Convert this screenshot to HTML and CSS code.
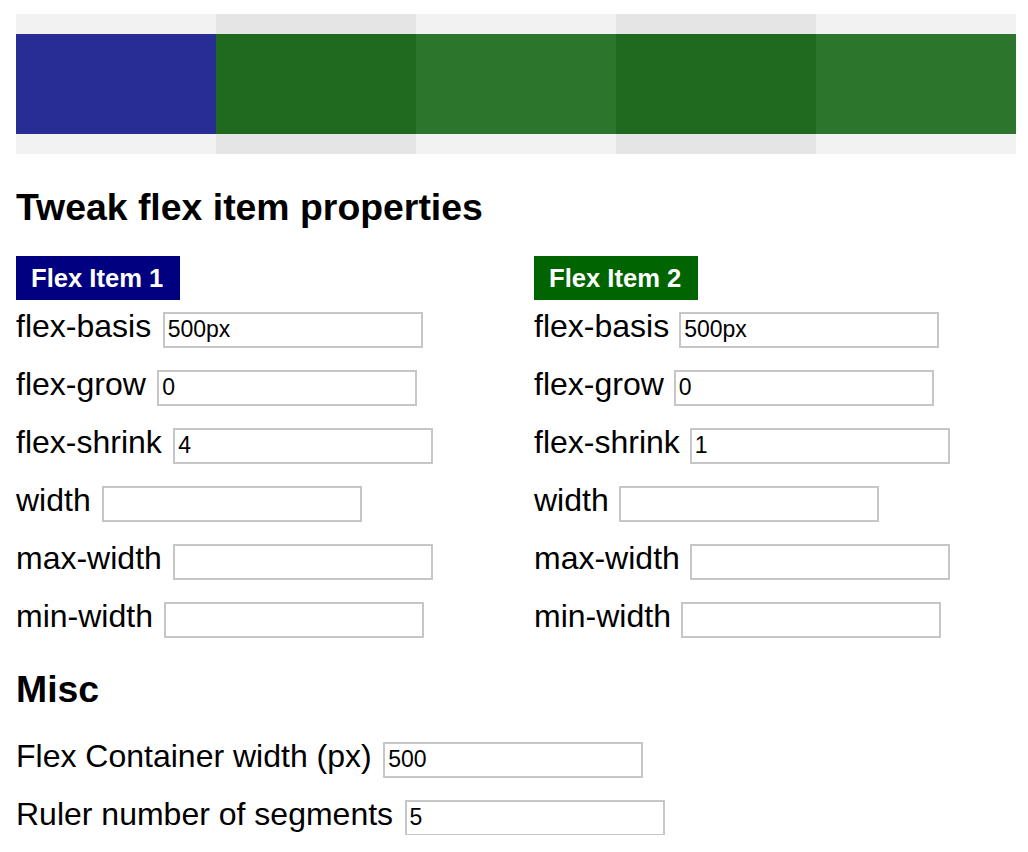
FILE: index.html
```html
<!DOCTYPE html>
<html lang="en">
<head>
<meta charset="utf-8">
<title>Flex item playground</title>
<link rel="stylesheet" href="styles.css">
</head>
<body>
<div class="page">
  <div class="stage">
    <div class="flexbox">
      <div class="item item-1"></div>
      <div class="item item-2"></div>
    </div>
  </div>

  <h3 class="section-title title-first">Tweak flex item properties</h3>

  <div class="columns">
    <div class="column">
      <div class="badge badge-blue">Flex Item 1</div>
      <label class="field field-first"><span class="label">flex-basis</span><input class="text-input" type="text" value="500px"></label>
      <label class="field"><span class="label">flex-grow</span><input class="text-input" type="text" value="0"></label>
      <label class="field"><span class="label">flex-shrink</span><input class="text-input" type="text" value="4"></label>
      <label class="field"><span class="label">width</span><input class="text-input" type="text" value=""></label>
      <label class="field"><span class="label">max-width</span><input class="text-input" type="text" value=""></label>
      <label class="field"><span class="label">min-width</span><input class="text-input" type="text" value=""></label>
    </div>
    <div class="column column-right">
      <div class="badge badge-green">Flex Item 2</div>
      <label class="field field-first"><span class="label">flex-basis</span><input class="text-input" type="text" value="500px"></label>
      <label class="field"><span class="label">flex-grow</span><input class="text-input" type="text" value="0"></label>
      <label class="field"><span class="label">flex-shrink</span><input class="text-input" type="text" value="1"></label>
      <label class="field"><span class="label">width</span><input class="text-input" type="text" value=""></label>
      <label class="field"><span class="label">max-width</span><input class="text-input" type="text" value=""></label>
      <label class="field"><span class="label">min-width</span><input class="text-input" type="text" value=""></label>
    </div>
  </div>

  <h3 class="section-title title-misc">Misc</h3>
  <label class="field field-misc"><span class="label">Flex Container width (px)</span><input class="text-input" type="text" value="500"></label>
  <label class="field"><span class="label">Ruler number of segments</span><input class="text-input" type="text" value="5"></label>
</div>
</body>
</html>
```

FILE: styles.css
```css
html, body {
  margin: 0;
  padding: 0;
  background: #ffffff;
}

body {
  font-family: "Liberation Sans", Arial, Helvetica, sans-serif;
  color: #000000;
}

.page {
  padding: 14px 16px 0;
}

.stage {
  width: 1000px;
  height: 140px;
  padding: 20px 0;
  box-sizing: border-box;
  background: linear-gradient(to right,
    #f2f2f2 0, #f2f2f2 200px,
    #e5e5e5 200px, #e5e5e5 400px,
    #f2f2f2 400px, #f2f2f2 600px,
    #e5e5e5 600px, #e5e5e5 800px,
    #f2f2f2 800px, #f2f2f2 1000px);
}

.flexbox {
  display: flex;
  height: 100px;
}

.item-1 {
  width: 200px;
  background: #272d95;
}

.item-2 {
  flex: 1;
  background: linear-gradient(to right,
    #1f6a1f 0, #1f6a1f 200px,
    #2c752c 200px, #2c752c 400px,
    #1f6a1f 400px, #1f6a1f 600px,
    #2c752c 600px, #2c752c 800px);
}

.section-title {
  font-size: 37.4px;
  line-height: 44px;
  font-weight: bold;
  margin: 0;
}

.title-first {
  margin-top: 31px;
}

.title-misc {
  margin-top: 30px;
}

.columns {
  display: grid;
  grid-template-columns: 518px 1fr;
  margin-top: 27px;
}

.badge {
  display: inline-block;
  height: 44px;
  line-height: 44px;
  padding: 0 17px 0 15px;
  font-size: 25.6px;
  font-weight: bold;
  color: #ffffff;
  vertical-align: top;
}

.badge-blue {
  background: #000080;
}

.badge-green {
  background: #006400;
}

.field {
  display: flex;
  align-items: baseline;
  gap: 11.5px;
  height: 36px;
  margin-top: 22px;
}

.column-right .field {
  gap: 10px;
}

.field-first {
  margin-top: 11px;
}

.field-misc {
  margin-top: 30px;
}

.label {
  font-size: 32px;
  line-height: 30px;
  white-space: nowrap;
}

.text-input {
  width: 260px;
  height: 36px;
  box-sizing: border-box;
  margin: 0;
  padding: 0 3px;
  border: 2px solid #c6c6c6;
  border-radius: 0;
  background: #ffffff;
  font-family: "Liberation Sans", Arial, Helvetica, sans-serif;
  font-size: 23px;
  color: #000000;
  outline: none;
}
```
